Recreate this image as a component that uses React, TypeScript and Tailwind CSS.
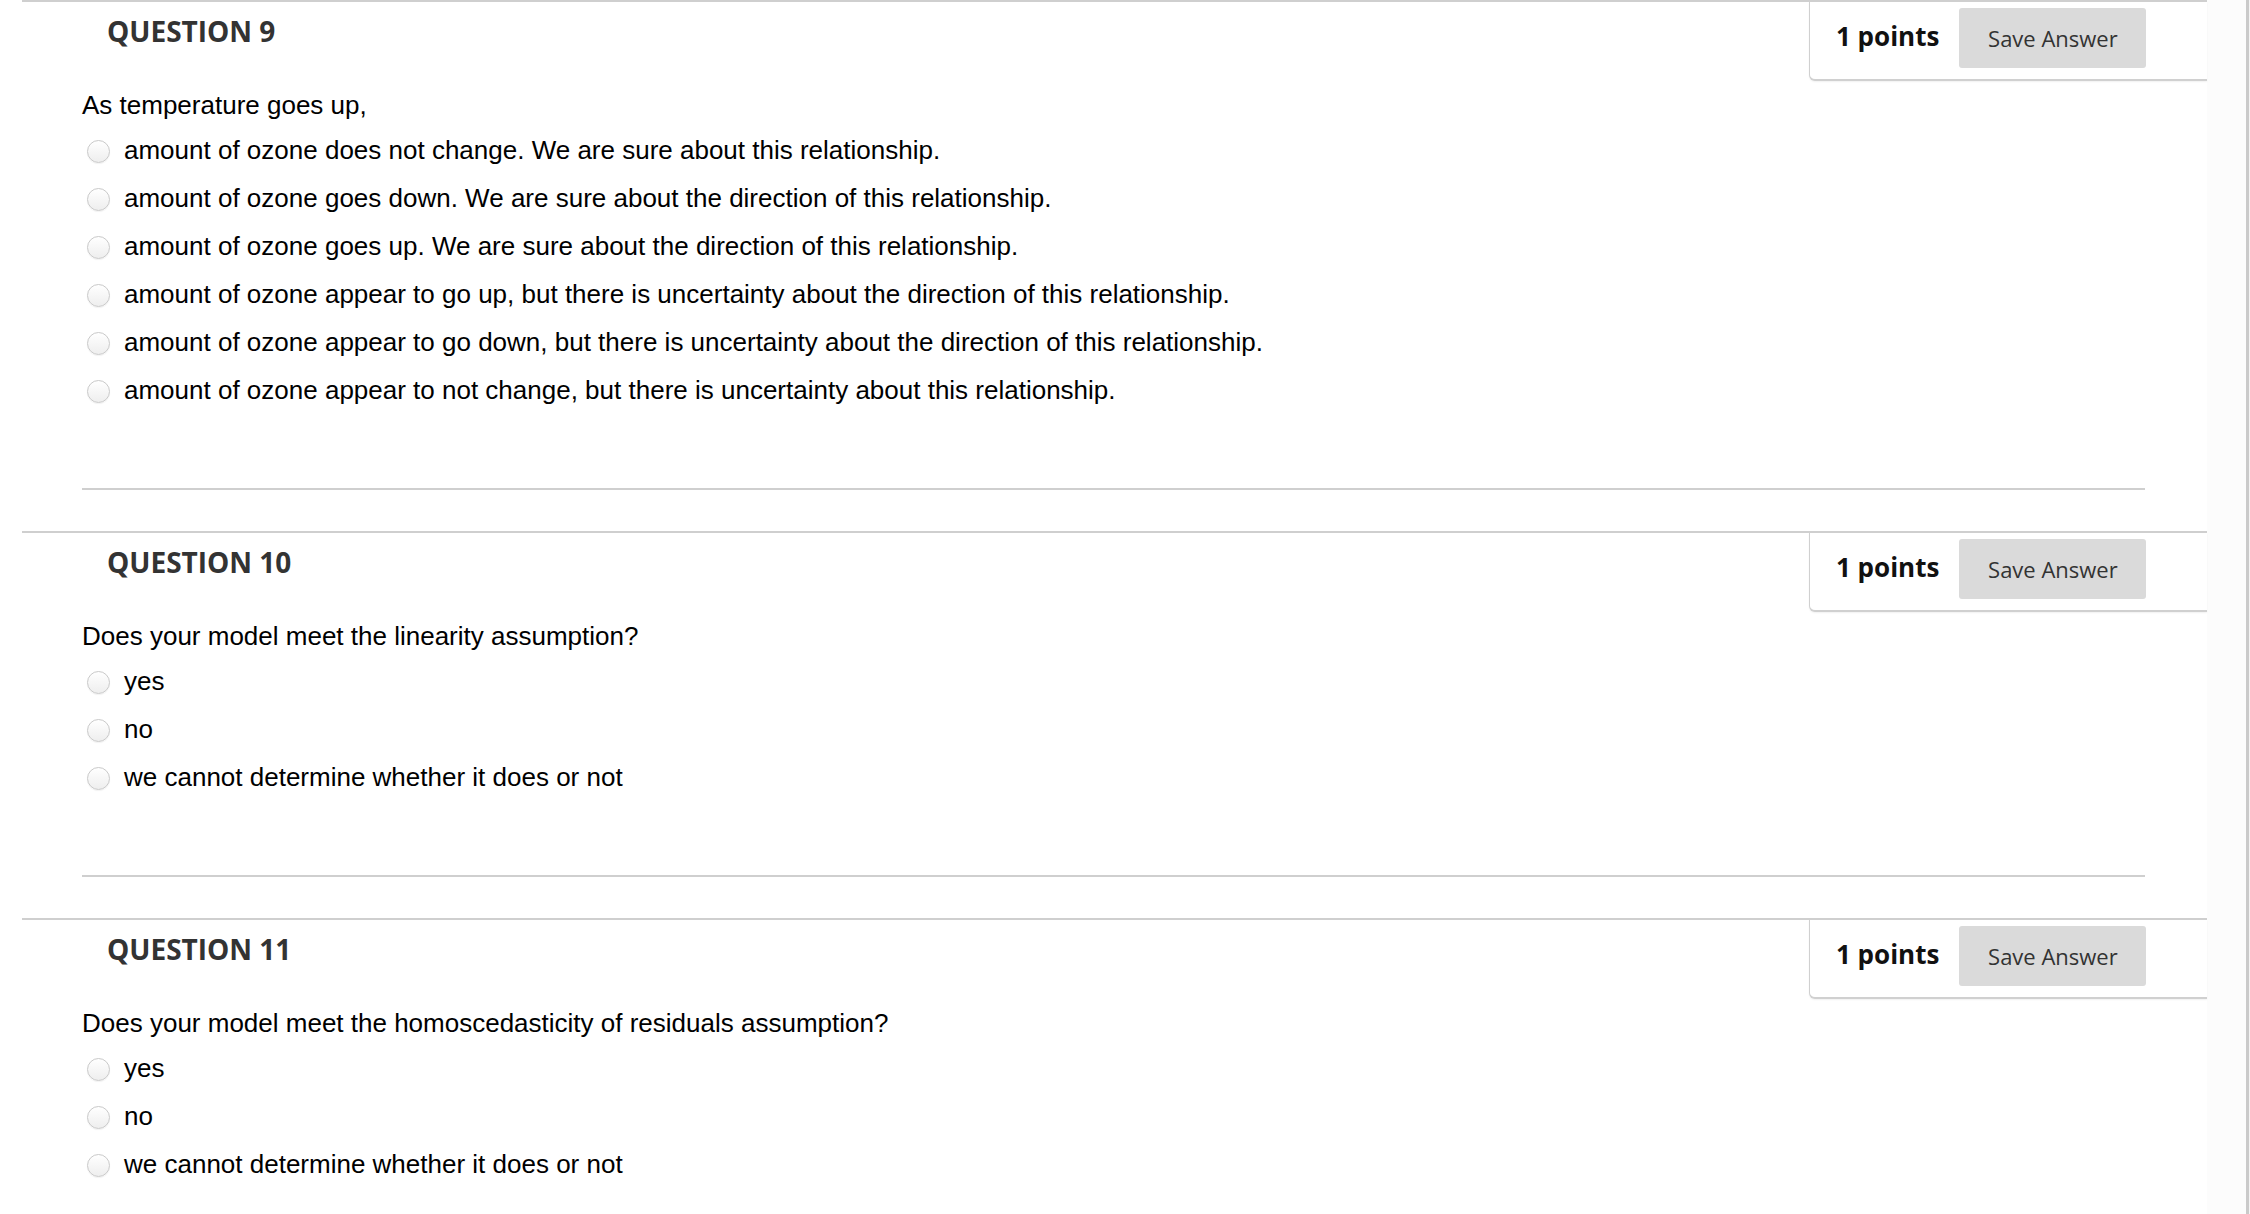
const questions = [
  {
    number: 9,
    prompt: "As temperature goes up,",
    options: [
      "amount of ozone does not change. We are sure about this relationship.",
      "amount of ozone goes down. We are sure about the direction of this relationship.",
      "amount of ozone goes up. We are sure about the direction of this relationship.",
      "amount of ozone appear to go up, but there is uncertainty about the direction of this relationship.",
      "amount of ozone appear to go down, but there is uncertainty about the direction of this relationship.",
      "amount of ozone appear to not change, but there is uncertainty about this relationship.",
    ],
  },
  {
    number: 10,
    prompt: "Does your model meet the linearity assumption?",
    options: ["yes", "no", "we cannot determine whether it does or not"],
  },
  {
    number: 11,
    prompt: "Does your model meet the homoscedasticity of residuals assumption?",
    options: ["yes", "no", "we cannot determine whether it does or not"],
  },
];

function Radio() {
  return (
    <span className="block h-[23px] w-[23px] shrink-0 translate-y-[1px] rounded-full border border-[#c9c9c9] bg-gradient-to-b from-white to-[#eeeeee] shadow-[0_1px_1px_rgba(0,0,0,0.05)]" />
  );
}

function PointsBox() {
  return (
    <div className="flex h-[79px] w-[398px] shrink-0 items-start rounded-bl-[6px] border-b-2 border-l border-[#d0d0d0] bg-white pl-[26px] shadow-[0_1px_2px_rgba(0,0,0,0.06)]">
      <span className="mt-[21px] font-['Open_Sans',sans-serif] text-[26px] font-bold leading-none text-[#111]">
        1 points
      </span>
      <button className="ml-[20px] mt-[6px] flex h-[60px] w-[187px] items-center justify-center rounded-[3px] bg-[#dadada] font-['Open_Sans',sans-serif] text-[22px] text-[#333]">
        Save Answer
      </button>
    </div>
  );
}

export default function App() {
  return (
    <div className="flex h-[1214px] overflow-hidden bg-white">
      <div className="flex w-[2246px] shrink-0 bg-[#fcfcfc]">
        <div className="w-[2207px] shrink-0 bg-white pl-[22px]">
          {questions.map((q, i) => (
            <section key={q.number} className="border-t-2 border-[#cfcfcf]">
              <div className="flex items-start justify-between">
                <h2 className="ml-[85px] mt-[15px] font-['Open_Sans',sans-serif] text-[28px] font-bold leading-none text-[#333]">
                  QUESTION {q.number}
                </h2>
                <PointsBox />
              </div>

              <p className="ml-[60px] mt-[11px] font-['Liberation_Sans',Arial,sans-serif] text-[26px] leading-[26px] text-black">
                {q.prompt}
              </p>

              <div className="ml-[65px] mt-[8px]">
                {q.options.map((opt) => (
                  <label key={opt} className="flex h-[48px] items-center gap-[14px]">
                    <Radio />
                    <span className="font-['Liberation_Sans',Arial,sans-serif] text-[26px] leading-[26px] text-black">
                      {opt}
                    </span>
                  </label>
                ))}
              </div>

              {i < questions.length - 1 ? (
                <div className="mb-[41px] ml-[60px] mt-[74px] h-[2px] w-[2063px] bg-[#cfcfcf]" />
              ) : null}
            </section>
          ))}
        </div>
      </div>
      <div className="w-[3px] shrink-0 bg-[#cacaca]" />
      <div className="flex-1 bg-[#f4f4f4]" />
    </div>
  );
}
